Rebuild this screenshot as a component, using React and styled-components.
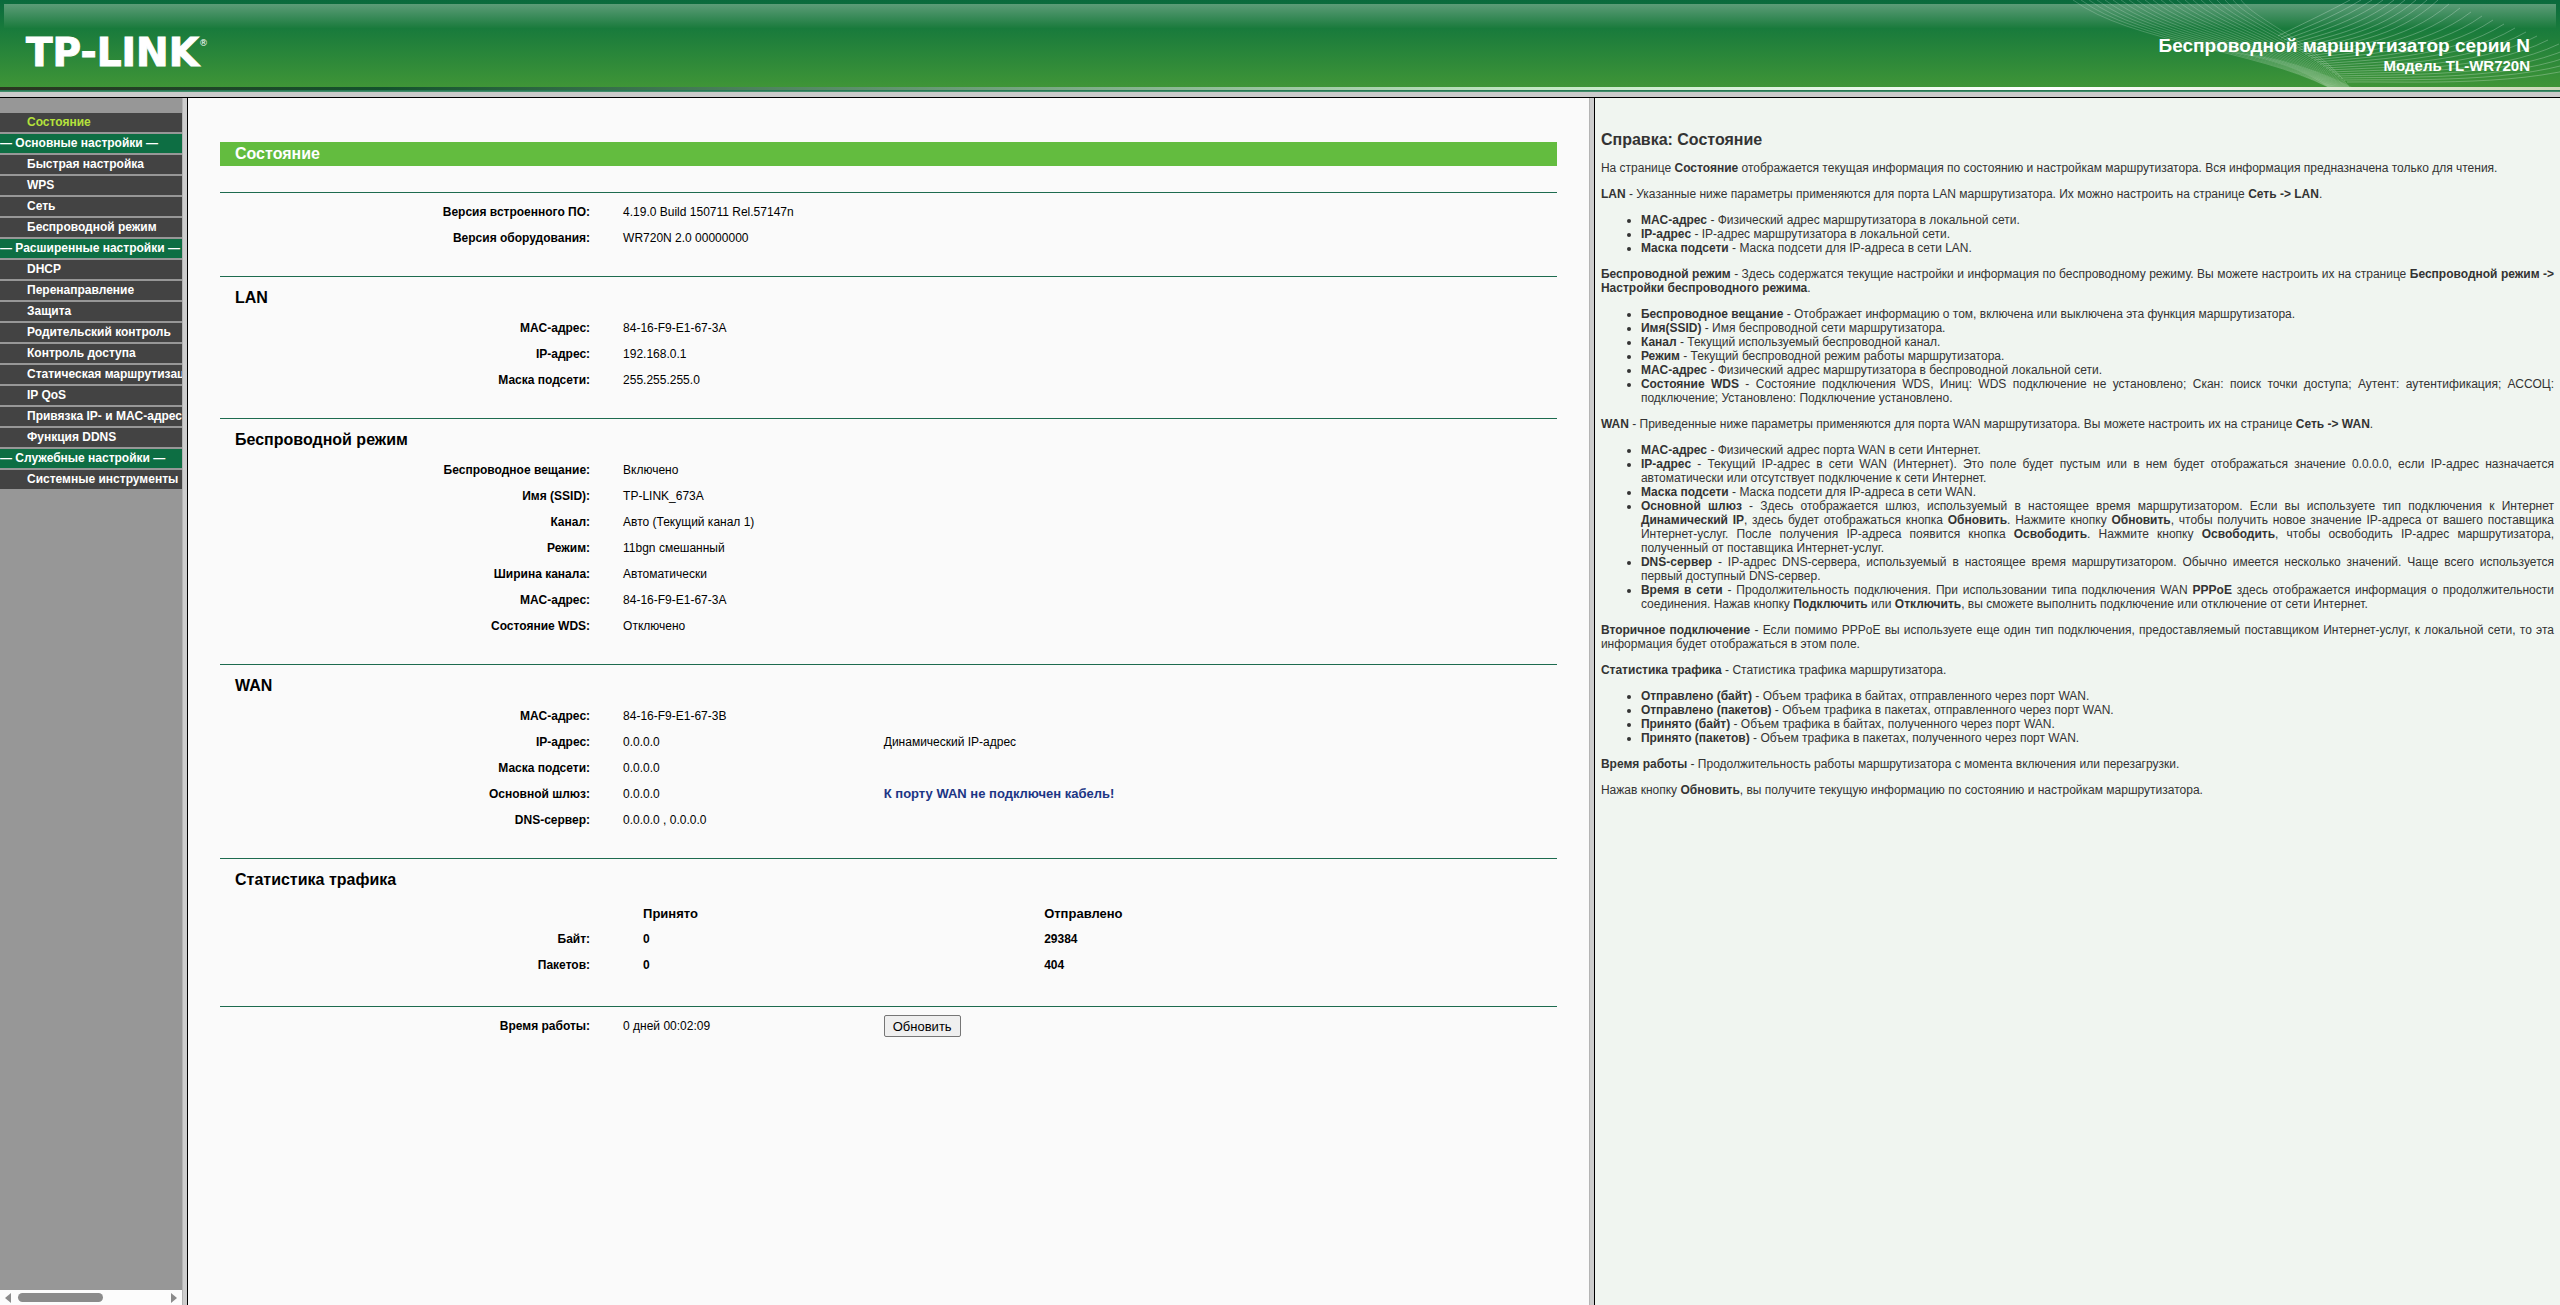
import React from "react";
import styled, { createGlobalStyle } from "styled-components";

const GlobalStyle = createGlobalStyle`
  * {
    box-sizing: border-box;
  }

  body {
    margin: 0;
    background: #fafafa;
    color: #000;
    font-family: "Liberation Sans", Arial, sans-serif;
    font-size: 12px;
    line-height: 14px;
  }
`

const Page = styled.div`
  display: flex;
  flex-direction: column;
  min-height: 100vh;
`

const Header = styled.header`
  position: relative;
  display: flex;
  align-items: center;
  justify-content: space-between;
  height: 87px;
  padding: 18px 30px 0 26px;
  color: white;
  background:
    linear-gradient(#5c9c78, #1b7b3d) 4px 4px / calc(100% - 8px) 24px no-repeat,
    linear-gradient(#0a6a3d, #187a3c 32%, #3f9537);
`

const Waves = styled.svg`
  position: absolute;
  top: 0;
  right: 0;
  width: 500px;
  height: 87px;
  pointer-events: none;
`

const Logo = styled.a`
  display: flex;
  align-items: flex-start;
  color: white;
  font-family: "DejaVu Sans", Verdana, sans-serif;
  font-size: 39px;
  line-height: 40px;
  font-weight: bold;
  text-decoration: none;
  -webkit-text-stroke: 1px white;

  sup {
    font-size: 9px;
    line-height: 20px;
    font-weight: normal;
    -webkit-text-stroke: 0;
  }
`

const Model = styled.div`
  position: relative;
  padding-top: 4px;
  text-align: right;
  font-weight: bold;
`

const ModelSeries = styled.div`
  font-size: 19px;
  line-height: 22px;
`

const ModelName = styled.div`
  font-size: 15px;
  line-height: 18px;
`

const HeaderEdge = styled.div`
  height: 11px;
  border-bottom: 1px solid black;
  background:
    linear-gradient(to right, #2b3520, #14522c 15%, #c4e8c4 60%, #ffffff 80%, #ccd8b8) 0 0 / 100% 3px no-repeat,
    linear-gradient(#1a6f4a, #4f9474) 0 3px / 100% 2px no-repeat,
    #cbcbcb;
`

const Frames = styled.div`
  flex: 1;
  display: grid;
  grid-template-columns: 182px 6px minmax(0, 45fr) 6px minmax(0, 31fr);
`

const Divider = styled.div`
  background: linear-gradient(to right, #b4b4b4 1px, #cdcdcd 1px);
  border-right: 1px solid black;
`

const Sidebar = styled.nav`
  display: flex;
  flex-direction: column;
  gap: 2px;
  min-width: 0;
  overflow: hidden;
  padding-top: 15px;
  background: #979797;
`

const MenuLink = styled.a`
  padding-left: 27px;
  line-height: 19px;
  font-weight: bold;
  white-space: nowrap;
  text-decoration: none;
  background: #434343;
  color: ${props => (props.$active ? "#b5e13c" : "white")};
`

const MenuGroup = styled.div`
  line-height: 19px;
  font-weight: bold;
  white-space: nowrap;
  color: white;
  background: #0d6e43;
`

const Scrollbar = styled.div`
  display: flex;
  align-items: center;
  height: 15px;
  margin-top: auto;
  padding: 0 5px;
  background: #fcfcfc;
`

const Arrow = styled.span`
  border: 5px solid transparent;
  border-width: 5px 0;
  ${props => (props.$right ? "margin-left: auto; border-left" : "border-right")}: 6px solid #8b8b8b;
`

const Thumb = styled.span`
  width: 85px;
  height: 9px;
  margin-left: 7px;
  border-radius: 5px;
  background: #8b8b8b;
`

const Main = styled.main`
  padding: 44px 32px;
  background: #fafafa;
`

const Title = styled.h1`
  margin: 0 0 26px;
  padding-left: 15px;
  font-size: 16px;
  line-height: 24px;
  color: white;
  background: #63bc3f;
`

const Section = styled.section`
  padding: ${props => (props.$titled ? "12px 0 25px" : "6px 0 25px")};
  border-top: 1px solid #1d6b4f;
`

const SectionTitle = styled.h2`
  margin: 0 0 8px;
  padding-left: 15px;
  font-size: 16px;
  line-height: 18px;
`

const Table = styled.table`
  width: 100%;
  table-layout: fixed;
  border-collapse: collapse;
`

const Label = styled.th`
  width: 30%;
  height: 26px;
  padding: 0 31px 0 0;
  text-align: right;
`

const Value = styled.td`
  width: ${props => (props.$rest ? "auto" : "19.5%")};
  padding: 0 0 0 2px;
`

const TrafficTable = styled(Table)`
  margin-bottom: 28px;
`

const TrafficSection = styled(Section)`
  padding-bottom: 0;
`

const TrafficHead = styled.th`
  width: ${props => props.$width};
  height: 29px;
  padding: 4px 0 0 22px;
  text-align: left;
  font-size: 13px;
`

const TrafficValue = styled.td`
  padding: 0 0 0 22px;
  font-weight: bold;
`

const Warning = styled.strong`
  font-size: 13px;
  color: #1c3584;
`

const RefreshButton = styled.button`
  display: block;
  height: 22px;
  padding: 0 8px;
  border: 1px solid #767676;
  border-radius: 2px;
  background: #efefef;
  color: #000;
  font-family: inherit;
  font-size: 13px;
`

const Help = styled.aside`
  padding: 33px 6px 12px;
  text-align: justify;
  color: #333;
  background: #f0f5f0;

  h2 {
    margin: 0;
    font-size: 16px;
    line-height: 18px;
  }

  p,
  ul {
    margin: 12px 0;
  }

  ul {
    padding-left: 40px;
  }
`

const menu = [
  { text: "Состояние", active: true },
  { text: "— Основные настройки —", group: true },
  { text: "Быстрая настройка" },
  { text: "WPS" },
  { text: "Сеть" },
  { text: "Беспроводной режим" },
  { text: "— Расширенные настройки —", group: true },
  { text: "DHCP" },
  { text: "Перенаправление" },
  { text: "Защита" },
  { text: "Родительский контроль" },
  { text: "Контроль доступа" },
  { text: "Статическая маршрутизация" },
  { text: "IP QoS" },
  { text: "Привязка IP- и MAC-адресов" },
  { text: "Функция DDNS" },
  { text: "— Служебные настройки —", group: true },
  { text: "Системные инструменты" },
]

const version = [
  ["Версия встроенного ПО:", "4.19.0 Build 150711 Rel.57147n"],
  ["Версия оборудования:", "WR720N 2.0 00000000"],
]

const lan = [
  ["MAC-адрес:", "84-16-F9-E1-67-3A"],
  ["IP-адрес:", "192.168.0.1"],
  ["Маска подсети:", "255.255.255.0"],
]

const wireless = [
  ["Беспроводное вещание:", "Включено"],
  ["Имя (SSID):", "TP-LINK_673A"],
  ["Канал:", "Авто (Текущий канал 1)"],
  ["Режим:", "11bgn смешанный"],
  ["Ширина канала:", "Автоматически"],
  ["MAC-адрес:", "84-16-F9-E1-67-3A"],
  ["Состояние WDS:", "Отключено"],
]

const wan = [
  ["MAC-адрес:", "84-16-F9-E1-67-3B"],
  ["IP-адрес:", "0.0.0.0", "Динамический IP-адрес"],
  ["Маска подсети:", "0.0.0.0"],
  ["Основной шлюз:", "0.0.0.0", <Warning>К порту WAN не подключен кабель!</Warning>],
  ["DNS-сервер:", "0.0.0.0 , 0.0.0.0"],
]

const uptime = [
  ["Время работы:", "0 дней 00:02:09", <RefreshButton type="button">Обновить</RefreshButton>],
]

const HeaderWaves = () => {
  const left = Array.from({ length: 22 }, (_, i) => i)
  const right = Array.from({ length: 24 }, (_, i) => i)

  return (
    <Waves viewBox="0 0 500 87" fill="none" stroke="white" aria-hidden="true">
      <path d="M160 51C210 54 255 68 292 87L268 87C240 68 205 57 160 51Z" fill="white" fillOpacity="0.12" stroke="none" />
      {left.map(i => (
        <path
          key={i}
          strokeOpacity="0.2"
          d={`M${13 + i * 8} 0C${70 + i * 6} ${42 - i} ${196 + i * 3} ${50 - i / 4} ${268 + i} 87`}
        />
      ))}
      {right.map(i => (
        <path
          key={i}
          strokeOpacity="0.26"
          d={`M${218 + i * 3} ${36 + i * 2}C${238 + i * 5} ${26 + i * 2.4} ${264 + i * 9} ${14 + i * 3.2} ${290 + i * 11} ${i < 8 ? 0 : (i - 8) * 4}`}
        />
      ))}
    </Waves>
  )
}

const Rows = ({ rows }) => (
  <Table>
    <tbody>
      {rows.map(([label, value, note]) => (
        <tr key={label}>
          <Label scope="row">{label}</Label>
          <Value>{value}</Value>
          <Value $rest>{note}</Value>
        </tr>
      ))}
    </tbody>
  </Table>
)

const HelpText = () => (
  <Help>
    <h2>Справка: Состояние</h2>
    <p>На странице <b>Состояние</b> отображается текущая информация по состоянию и настройкам маршрутизатора. Вся информация предназначена только для чтения.</p>
    <p><b>LAN</b> - Указанные ниже параметры применяются для порта LAN маршрутизатора. Их можно настроить на странице <b>Сеть -&gt; LAN</b>.</p>
    <ul>
      <li><b>MAC-адрес</b> - Физический адрес маршрутизатора в локальной сети.</li>
      <li><b>IP-адрес</b> - IP-адрес маршрутизатора в локальной сети.</li>
      <li><b>Маска подсети</b> - Маска подсети для IP-адреса в сети LAN.</li>
    </ul>
    <p><b>Беспроводной режим</b> - Здесь содержатся текущие настройки и информация по беспроводному режиму. Вы можете настроить их на странице <b>Беспроводной режим -&gt; Настройки беспроводного режима</b>.</p>
    <ul>
      <li><b>Беспроводное вещание</b> - Отображает информацию о том, включена или выключена эта функция маршрутизатора.</li>
      <li><b>Имя(SSID)</b> - Имя беспроводной сети маршрутизатора.</li>
      <li><b>Канал</b> - Текущий используемый беспроводной канал.</li>
      <li><b>Режим</b> - Текущий беспроводной режим работы маршрутизатора.</li>
      <li><b>MAC-адрес</b> - Физический адрес маршрутизатора в беспроводной локальной сети.</li>
      <li><b>Состояние WDS</b> - Состояние подключения WDS, Иниц: WDS подключение не установлено; Скан: поиск точки доступа; Аутент: аутентификация; АССОЦ: подключение; Установлено: Подключение установлено.</li>
    </ul>
    <p><b>WAN</b> - Приведенные ниже параметры применяются для порта WAN маршрутизатора. Вы можете настроить их на странице <b>Сеть -&gt; WAN</b>.</p>
    <ul>
      <li><b>MAC-адрес</b> - Физический адрес порта WAN в сети Интернет.</li>
      <li><b>IP-адрес</b> - Текущий IP-адрес в сети WAN (Интернет). Это поле будет пустым или в нем будет отображаться значение 0.0.0.0, если IP-адрес назначается автоматически или отсутствует подключение к сети Интернет.</li>
      <li><b>Маска подсети</b> - Маска подсети для IP-адреса в сети WAN.</li>
      <li><b>Основной шлюз</b> - Здесь отображается шлюз, используемый в настоящее время маршрутизатором. Если вы используете тип подключения к Интернет <b>Динамический IP</b>, здесь будет отображаться кнопка <b>Обновить</b>. Нажмите кнопку <b>Обновить</b>, чтобы получить новое значение IP-адреса от вашего поставщика Интернет-услуг. После получения IP-адреса появится кнопка <b>Освободить</b>. Нажмите кнопку <b>Освободить</b>, чтобы освободить IP-адрес маршрутизатора, полученный от поставщика Интернет-услуг.</li>
      <li><b>DNS-сервер</b> - IP-адрес DNS-сервера, используемый в настоящее время маршрутизатором. Обычно имеется несколько значений. Чаще всего используется первый доступный DNS-сервер.</li>
      <li><b>Время в сети</b> - Продолжительность подключения. При использовании типа подключения WAN <b>PPPoE</b> здесь отображается информация о продолжительности соединения. Нажав кнопку <b>Подключить</b> или <b>Отключить</b>, вы сможете выполнить подключение или отключение от сети Интернет.</li>
    </ul>
    <p><b>Вторичное подключение</b> - Если помимо PPPoE вы используете еще один тип подключения, предоставляемый поставщиком Интернет-услуг, к локальной сети, то эта информация будет отображаться в этом поле.</p>
    <p><b>Статистика трафика</b> - Статистика трафика маршрутизатора.</p>
    <ul>
      <li><b>Отправлено (байт)</b> - Объем трафика в байтах, отправленного через порт WAN.</li>
      <li><b>Отправлено (пакетов)</b> - Объем трафика в пакетах, отправленного через порт WAN.</li>
      <li><b>Принято (байт)</b> - Объем трафика в байтах, полученного через порт WAN.</li>
      <li><b>Принято (пакетов)</b> - Объем трафика в пакетах, полученного через порт WAN.</li>
    </ul>
    <p><b>Время работы</b> - Продолжительность работы маршрутизатора с момента включения или перезагрузки.</p>
    <p>Нажав кнопку <b>Обновить</b>, вы получите текущую информацию по состоянию и настройкам маршрутизатора.</p>
  </Help>
)

const App = () => {
  return (
    <>
      <GlobalStyle />
      <Page>
        <Header>
          <HeaderWaves />
          <Logo href="#">TP-LINK<sup>®</sup></Logo>
          <Model>
            <ModelSeries>Беспроводной маршрутизатор серии N</ModelSeries>
            <ModelName>Модель TL-WR720N</ModelName>
          </Model>
        </Header>
        <HeaderEdge />
        <Frames>
          <Sidebar>
            {menu.map(item =>
              item.group ? (
                <MenuGroup key={item.text}>{item.text}</MenuGroup>
              ) : (
                <MenuLink key={item.text} href="#" $active={item.active}>{item.text}</MenuLink>
              )
            )}
            <Scrollbar>
              <Arrow />
              <Thumb />
              <Arrow $right />
            </Scrollbar>
          </Sidebar>
          <Divider />
          <Main>
            <Title>Состояние</Title>
            <Section>
              <Rows rows={version} />
            </Section>
            <Section $titled>
              <SectionTitle>LAN</SectionTitle>
              <Rows rows={lan} />
            </Section>
            <Section $titled>
              <SectionTitle>Беспроводной режим</SectionTitle>
              <Rows rows={wireless} />
            </Section>
            <Section $titled>
              <SectionTitle>WAN</SectionTitle>
              <Rows rows={wan} />
            </Section>
            <TrafficSection $titled>
              <SectionTitle>Статистика трафика</SectionTitle>
              <TrafficTable>
                <thead>
                  <tr>
                    <Label as="td" />
                    <TrafficHead $width="30%">Принято</TrafficHead>
                    <TrafficHead $width="auto">Отправлено</TrafficHead>
                  </tr>
                </thead>
                <tbody>
                  <tr>
                    <Label scope="row">Байт:</Label>
                    <TrafficValue>0</TrafficValue>
                    <TrafficValue>29384</TrafficValue>
                  </tr>
                  <tr>
                    <Label scope="row">Пакетов:</Label>
                    <TrafficValue>0</TrafficValue>
                    <TrafficValue>404</TrafficValue>
                  </tr>
                </tbody>
              </TrafficTable>
            </TrafficSection>
            <Section>
              <Rows rows={uptime} />
            </Section>
          </Main>
          <Divider />
          <HelpText />
        </Frames>
      </Page>
    </>
  )
}

export default App;
